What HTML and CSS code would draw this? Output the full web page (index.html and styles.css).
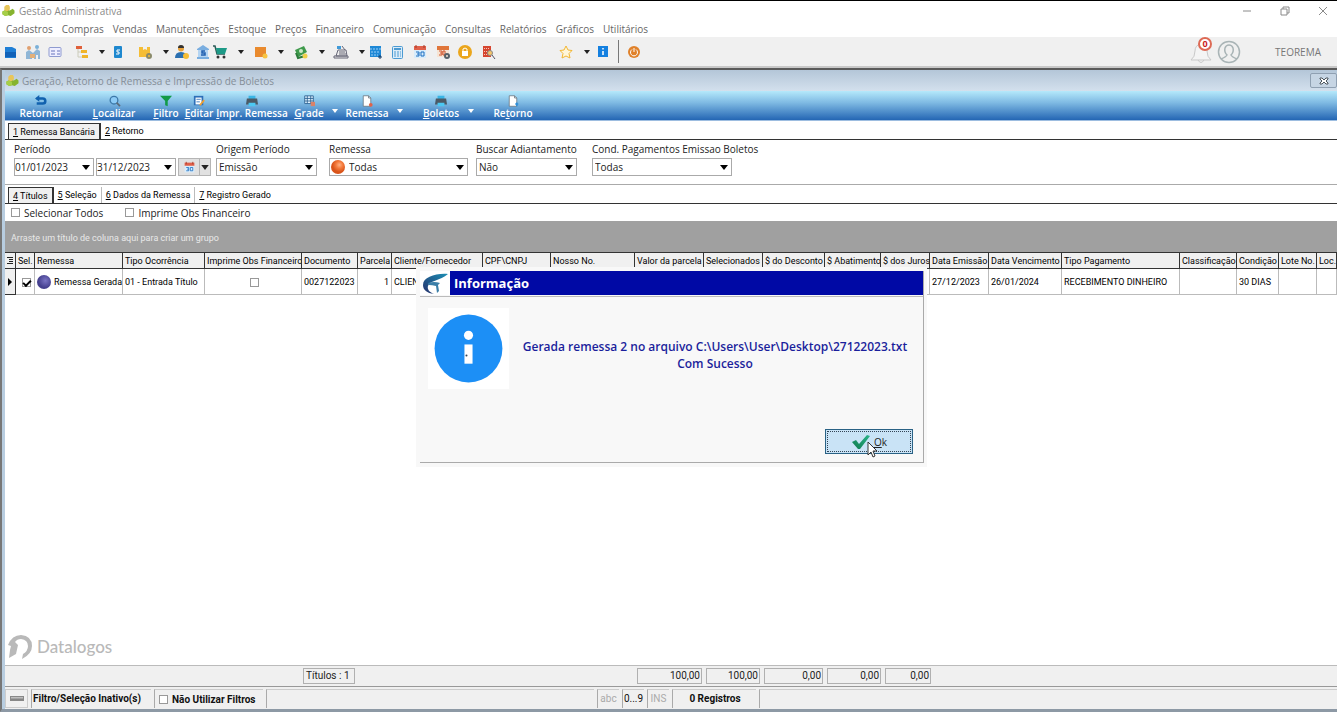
FILE: index.html
```html
<!DOCTYPE html>
<html lang="pt-BR">
<head>
<meta charset="utf-8">
<title>Gestão Administrativa</title>
<link rel="stylesheet" href="styles.css">
</head>
<body>
<svg width="0" height="0" class="defs" aria-hidden="true">
  <defs>
    <linearGradient id="g-logo" x1="0" y1="1" x2="1" y2="0"><stop offset="0" stop-color="#27306b"/><stop offset="1" stop-color="#1b8fb5"/></linearGradient>
    <linearGradient id="g-tick" x1="0" y1="1" x2="1" y2="0"><stop offset="0" stop-color="#0f7a4d"/><stop offset="1" stop-color="#2bb58a"/></linearGradient>
    <radialGradient id="g-orange" cx=".6" cy=".35"><stop offset="0" stop-color="#ffb184"/><stop offset=".5" stop-color="#f47a3c"/><stop offset="1" stop-color="#d9541a"/></radialGradient>
    <radialGradient id="g-violet" cx=".6" cy=".4"><stop offset="0" stop-color="#7a74c4"/><stop offset="1" stop-color="#45408f"/></radialGradient>
    <symbol id="app" viewBox="0 0 14 14"><path d="M1 8l4-2 4 1 3-2 2 2v3l-4 3-3-1-3 1-3-2z" fill="#86b32e"/><path d="M3 3l2-2h3l1 2v3l-3 2-3-1z" fill="#e8c65a"/><path d="M1 8l3-1 3 2v3l-3 1-3-2z" fill="#a6cf48"/></symbol>
    <symbol id="cal" viewBox="0 0 16 16"><path d="M2 2h12v4H2z" fill="#e0604a"/><path d="M2 6h12v8H2z" fill="#d8ecfb"/><path d="M4 1v3M12 1v3" stroke="#a33a28"/><path d="M4 8h3v4H4M5 10h2M9 8h3v4H9z" stroke="#1c6fc0" fill="none"/></symbol>
    <symbol id="print" viewBox="0 0 16 14"><path d="M4 1h8v4H4z" fill="#39b6e6"/><path d="M2 4h12l1 7H1z" fill="#4b5a66"/><path d="M4 9h8v4H4z" fill="#4cc8f2"/></symbol>
    <symbol id="page" viewBox="0 0 16 16"><path d="M3 1h7l3 3v11H3z" fill="#fff" stroke="#66707a"/><path d="M10 1v3h3" fill="none" stroke="#66707a"/></symbol>
    <symbol id="tri" viewBox="0 0 6 4"><path d="M0 0h6L3 4z" fill="currentColor"/></symbol>
  </defs>
</svg>
<div class="app">
  <header class="titlebar">
    <svg class="app-icon"><use href="#app"/></svg>
    <h1>Gestão Administrativa</h1>
    <div class="win-buttons">
      <button aria-label="Minimizar"><svg viewBox="0 0 10 10"><path d="M1 5h8"/></svg></button>
      <button aria-label="Restaurar"><svg viewBox="0 0 10 10"><path d="M1 3h6v6H1zM3 3V1h6v6H7"/></svg></button>
      <button aria-label="Fechar"><svg viewBox="0 0 10 10"><path d="M1 1l8 8M9 1L1 9"/></svg></button>
    </div>
  </header>
  <nav class="menu">
    <a href="#">Cadastros</a><a href="#">Compras</a><a href="#">Vendas</a><a href="#">Manutenções</a><a href="#">Estoque</a><a href="#">Preços</a><a href="#">Financeiro</a><a href="#">Comunicação</a><a href="#">Consultas</a><a href="#">Relatórios</a><a href="#">Gráficos</a><a href="#">Utilitários</a>
  </nav>
  <div class="toolbar">
    <div class="tools">
      <button aria-label="Empresa"><svg viewBox="0 0 16 16"><path d="M3 3h7l4 2v9H3z" fill="#1f7fd6"/><path d="M3 8h11v5H3z" fill="#1262b8"/></svg></button>
      <button aria-label="Clientes"><svg viewBox="0 0 16 16"><circle cx="4" cy="4" r="2" fill="#e0a070"/><circle cx="12" cy="3" r="2" fill="#7ab0d8"/><path d="M1 15V8l3-2 4 3 4-4 3 2v8h-2v-4h-2v4H9v-4H7v4z" fill="#8fb6d6"/><path d="M5 10h5v4H5z" fill="#e2b07a"/></svg></button>
      <button aria-label="Cartão"><svg viewBox="0 0 16 16"><rect x="2" y="3.500" width="12" height="9" rx="1" fill="#eef" stroke="#8f9bd0"/><path d="M4 7h4M4 10h4M10 7h3M10 10h3" stroke="#6674bb"/></svg></button>
      <button aria-label="Estrutura"><svg viewBox="0 0 16 16"><path d="M4 5v8h5M4 8h4" fill="none" stroke="#ccb"/><path d="M2 2h6v3H2z" fill="#e0603a"/><path d="M7 6h6v3H7zM8 11h6v3H8z" fill="#f0b429"/></svg></button>
      <button class="drop" aria-label="Mais"><svg><use href="#tri"/></svg></button>
      <button aria-label="Preço"><svg viewBox="0 0 16 16"><rect x="4" y="2" width="8" height="12" rx="1" fill="#1e88cf"/><path d="M10 6H7v2h2v2H6" fill="none" stroke="#fff"/></svg></button>
      <button aria-label="Produto"><svg viewBox="0 0 16 16"><path d="M2 3h4v3l2-1 2 1V3h3v10H2z" fill="#f5bd35"/><circle cx="12" cy="12" r="2" fill="none" stroke="#8a8a6a" stroke-width="2"/></svg></button>
      <button class="drop" aria-label="Mais"><svg><use href="#tri"/></svg></button>
      <button aria-label="Usuário"><svg viewBox="0 0 16 16"><circle cx="7" cy="4.500" r="3" fill="#e8a13a"/><path d="M4 4q0-3 3-3t3 3z" fill="#333"/><path d="M1 14q0-6 6-6t6 6z" fill="#2a6fb0"/><circle cx="12" cy="12" r="3" fill="#f5bd35"/></svg></button>
      <button aria-label="Banco"><svg viewBox="0 0 16 16"><path d="M2 5l6-4 6 4v1H2zM2 13h12v2H2z" fill="#7aaee0"/><path d="M3 6h10v7H3z" fill="#b4d4f2"/><path d="M10 7H7v2h3v2H6" fill="none" stroke="#205fb0" stroke-width="1.500"/></svg></button>
      <button aria-label="Compras"><svg viewBox="0 0 16 16"><path d="M1 2h2l2 8h8" fill="none" stroke="#2a5a55" stroke-width="1.500"/><path d="M4 4h11l-2 6H5z" fill="#1d9a87"/><circle cx="6" cy="13" r="1.500" fill="#333"/><circle cx="12" cy="13" r="1.500" fill="#333"/></svg></button>
      <button class="drop" aria-label="Mais"><svg><use href="#tri"/></svg></button>
      <button aria-label="Estoque"><svg viewBox="0 0 16 16"><path d="M2 3h11v10H2z" fill="#e98a2e"/><circle cx="12" cy="12" r="2.500" fill="#f7c443"/></svg></button>
      <button class="drop" aria-label="Mais"><svg><use href="#tri"/></svg></button>
      <button aria-label="Dinheiro"><svg viewBox="0 0 16 16"><path d="M2 6l9-4 3 6-9 5z" fill="#3f9a4c"/><circle cx="8" cy="7" r="2" fill="#cde8c8"/><path d="M3 9l2 5 7-2" fill="none" stroke="#2b7a3a" stroke-width="2"/><circle cx="12" cy="12" r="2.500" fill="#f0cf4a"/></svg></button>
      <button class="drop" aria-label="Mais"><svg><use href="#tri"/></svg></button>
      <button aria-label="Caixa"><svg viewBox="0 0 16 16"><path d="M1 12h14v2H1zM3 12l2-6h8l1 6z" fill="#eee" stroke="#667"/><path d="M4 2h4v3H4z" fill="#3f9ad8"/><path d="M9 2l3 4M6 8h6M6 10h7" stroke="#667"/></svg></button>
      <button class="drop" aria-label="Mais"><svg><use href="#tri"/></svg></button>
      <button aria-label="Agenda"><svg viewBox="0 0 16 16"><path d="M3 2h11v11H3z" fill="#1e88d6"/><path d="M3 5h11M4 8h9M4 11h7" stroke="#9ad0f8" stroke-dasharray="2 1"/><path d="M11 13h4M13 11v4" stroke="#123a66"/></svg></button>
      <button aria-label="Calculadora"><svg viewBox="0 0 16 16"><rect x="3.500" y="2.500" width="10" height="12" rx="1" fill="#dcecf8" stroke="#4b9ad2"/><path d="M5 4h7v2H5z" fill="#4b9ad2"/><path d="M5 8h7M5 10h7M5 12h7" stroke="#4b9ad2" stroke-dasharray="2 1"/></svg></button>
      <button aria-label="Calendário"><svg><use href="#cal"/></svg></button>
      <button aria-label="Configurar calendário"><svg viewBox="0 0 16 16"><path d="M2 2h12v4H2z" fill="#e0763a"/><path d="M2 6h12v7H2z" fill="#f6e4d4"/><path d="M4 7h3v4H4M5 9h2M8 7h2v4H8z" stroke="#d0532a" fill="none"/><circle cx="12" cy="12" r="2" fill="none" stroke="#556068" stroke-width="2"/></svg></button>
      <button aria-label="Bloquear"><svg viewBox="0 0 16 16"><circle cx="8" cy="8" r="7" fill="#eba61c"/><path d="M5 7h6v5H5z" fill="#fff"/><path d="M6 7V5q2-2 4 0v2" fill="none" stroke="#fff"/></svg></button>
      <button aria-label="Pesquisar prédio"><svg viewBox="0 0 16 16"><path d="M3 2h8v11H3z" fill="#d6452f"/><path d="M4 4.500h6M4 7.500h6M4 10.500h6" stroke="#f7c6b8" stroke-dasharray="1 1"/><circle cx="10" cy="9" r="2.500" fill="#f5c56a" stroke="#888"/><path d="M12 11l3 4" stroke="#556"/></svg></button>
      <button aria-label="Favoritos"><svg viewBox="0 0 16 16"><path d="M8 2l2 4 4 .5-3 3 1 4.500-4-2-4 2 1-4.500-3-3L6 6z" fill="#fff6d8" stroke="#f2b632"/></svg></button>
      <button class="drop" aria-label="Mais"><svg><use href="#tri"/></svg></button>
      <button aria-label="Informações"><svg viewBox="0 0 16 16"><path d="M3 2h10v11H3z" fill="#1480e0"/><path d="M8 4v1.500M8 7v4" stroke="#fff" stroke-width="1.500"/></svg></button>
      <span class="sep"></span>
      <button aria-label="Sair"><svg viewBox="0 0 16 16"><circle cx="8" cy="8" r="6" fill="#e0812a"/><path d="M6 5.500a3.500 3.500 0 1 0 4 0M8 4v4" fill="none" stroke="#fff"/></svg></button>
    </div>
    <div class="user">
      <button class="bell" aria-label="Notificações"><svg viewBox="0 0 24 26"><path d="M2 21q4-3 4-9 0-6 6-7 6 1 6 7 0 6 4 9z" fill="#f4f4f4" stroke="#c9c9c9"/><path d="M9 21q3 5 6 0" fill="none" stroke="#c9c9c9"/></svg><span class="badge">0</span></button>
      <button class="avatar" aria-label="Usuário"><svg viewBox="0 0 24 24"><circle cx="12" cy="12" r="10.500" fill="none" stroke="#a9b4b6" stroke-width="1.500"/><path d="M4 19q5-2 6-4-3-3-2-7 1-3 4-3t4 3q1 4-2 7 1 2 6 4" fill="none" stroke="#a9b4b6" stroke-width="1.500"/></svg></button>
      <span class="company">TEOREMA</span>
    </div>
  </div>

  <main class="mdi">
    <header class="mdi-title">
      <svg class="app-icon"><use href="#app"/></svg>
      <h2>Geração, Retorno de Remessa e Impressão de Boletos</h2>
      <button class="mdi-close" aria-label="Fechar janela"><svg viewBox="0 0 10 8"><path d="M1 1h2l2 2 2-2h2v1L7 4l2 2v1H7L5 5 3 7H1V6l2-2-2-2z" fill="#fff" stroke="#4b545c"/></svg></button>
    </header>
    <div class="actions">
      <button><svg viewBox="0 0 16 14"><path d="M3 4h7q3 0 3 3t-3 3H3" fill="none" stroke="#1161ae" stroke-width="3"/><path d="M6 0v8L1 4z" fill="#1161ae"/></svg><span>Retornar</span></button>
      <button><svg viewBox="0 0 16 14"><circle cx="8" cy="6" r="4.500" fill="#8ccbf6" stroke="#3c78a8" stroke-width="1.500"/><path d="M11 9l4 4" stroke="#5b6b7a" stroke-width="2"/></svg><span><u>L</u>ocalizar</span></button>
      <button><svg viewBox="0 0 16 14"><path d="M1 1h14L10 7v6l-3-1V7z" fill="#129a48"/></svg><span><u>F</u>iltro</span></button>
      <button><svg viewBox="0 0 16 14"><path d="M2 1h11v11H2z" fill="#2e6fb8"/><path d="M4 3h7v8H4z" fill="#fff"/><path d="M5 5h5M5 8h4" stroke="#2e6fb8"/><path d="M14 6l-5 6" stroke="#f0a030" stroke-width="2"/></svg><span><u>E</u>ditar</span></button>
      <button><svg viewBox="0 0 16 14"><use href="#print"/></svg><span><u>I</u>mpr. Remessa</span></button>
      <button><svg viewBox="0 0 16 14"><path d="M3 1h10v9H3z" fill="#dff2ff" stroke="#2a6090"/><path d="M6 1v9M10 1v9M3 4h10M3 7h10" stroke="#2a6090"/><path d="M10 8h5v5h-5z" fill="#d9826a"/></svg><span><u>G</u>rade</span></button>
      <button class="drop" aria-label="Opções de grade"><svg><use href="#tri"/></svg></button>
      <button><svg viewBox="0 0 16 16"><use href="#page"/><circle cx="13" cy="13" r="2.500" fill="#e0634a"/></svg><span>Remessa</span></button>
      <button class="drop" aria-label="Opções de remessa"><svg><use href="#tri"/></svg></button>
      <button><svg viewBox="0 0 16 14"><use href="#print"/></svg><span><u>B</u>oletos</span></button>
      <button class="drop" aria-label="Opções de boletos"><svg><use href="#tri"/></svg></button>
      <button><svg viewBox="0 0 16 16"><use href="#page"/><path d="M13 10v5M11 12h4" stroke="#2d8ed8" stroke-width="2"/></svg><span>Re<u>t</u>orno</span></button>
    </div>

    <div class="tabs main-tabs">
      <button class="active"><u>1</u> Remessa Bancária</button><button><u>2</u> Retorno</button>
    </div>
    <form class="filters">
      <div class="field period">
        <label for="d1">Período</label>
        <div class="period-row">
          <span class="combo date"><input id="d1" value="01/01/2023"></span>
          <span class="combo date"><input aria-label="Data final" value="31/12/2023"></span>
          <span class="cal-group"><button type="button" aria-label="Calendário"><svg class="cal-icon"><use href="#cal"/></svg></button><button type="button" class="drop" aria-label="Períodos"><svg><use href="#tri"/></svg></button></span>
        </div>
      </div>
      <div class="field origin"><label for="s1">Origem Período</label><span class="combo"><select id="s1"><option>Emissão</option></select></span></div>
      <div class="field shipment"><label for="s2">Remessa</label><span class="combo with-ball"><svg class="ball" viewBox="0 0 14 14"><circle cx="7" cy="7" r="7" fill="url(#g-orange)"/></svg><select id="s2"><option>Todas</option></select></span></div>
      <div class="field advance"><label for="s3">Buscar Adiantamento</label><span class="combo"><select id="s3"><option>Não</option></select></span></div>
      <div class="field payment"><label for="s4">Cond. Pagamentos Emissao Boletos</label><span class="combo"><select id="s4"><option>Todas</option></select></span></div>
    </form>

    <div class="tabs sub-tabs">
      <button class="active"><u>4</u> Títulos</button><button><u>5</u> Seleção</button><button><u>6</u> Dados da Remessa</button><button><u>7</u> Registro Gerado</button>
    </div>
    <div class="options">
      <label><input type="checkbox">Selecionar Todos</label>
      <label><input type="checkbox">Imprime Obs Financeiro</label>
    </div>
    <div class="group-bar">Arraste um título de coluna aqui para criar um grupo</div>
    <div class="grid-area">
      <table>
        <colgroup><col class="w10"><col class="w20"><col class="w88"><col class="w82"><col class="w96"><col class="w56"><col class="w34"><col class="w91"><col class="w68"><col class="w84"><col class="w69"><col class="w59"><col class="w62"><col class="w56"><col class="w49"><col class="w59"><col class="w73"><col class="w117"><col class="w57"><col class="w42"><col class="w38"><col></colgroup>
        <thead><tr><th><svg class="mark" viewBox="0 0 6 10"><path d="M0 1.500h6M2 3.500h4M2 5.500h4M0 7.500h6" stroke="#222"/></svg></th><th>Sel.</th><th>Remessa</th><th>Tipo Ocorrência</th><th>Imprime Obs Financeiro</th><th>Documento</th><th>Parcela</th><th>Cliente/Fornecedor</th><th>CPF\CNPJ</th><th>Nosso No.</th><th>Valor da parcela</th><th>Selecionados</th><th>$ do Desconto</th><th>$ Abatimento</th><th>$ dos Juros</th><th>Data Emissão</th><th>Data Vencimento</th><th>Tipo Pagamento</th><th>Classificação</th><th>Condição</th><th>Lote No.</th><th>Loc.</th></tr></thead>
        <tbody><tr><td class="current"><svg class="mark" viewBox="0 0 6 10"><path d="M1 1l4 4-4 4z"/></svg></td><td class="center"><input type="checkbox" checked aria-label="Selecionar título"></td><td><span class="status"><svg class="ball" viewBox="0 0 14 14"><circle cx="7" cy="7" r="7" fill="url(#g-violet)"/></svg>Remessa Gerada</span></td><td>01 - Entrada Título</td><td class="center"><input type="checkbox" aria-label="Imprime Obs Financeiro"></td><td>0027122023</td><td class="right">1</td><td>CLIENTE</td><td></td><td></td><td></td><td></td><td></td><td></td><td></td><td>27/12/2023</td><td>26/01/2024</td><td>RECEBIMENTO DINHEIRO</td><td></td><td>30 DIAS</td><td></td><td></td></tr></tbody>
      </table>
      <div class="brand"><svg viewBox="0 0 26 26"><path d="M1 11Q5 1 14 1q11 1 11 11 0 8-10 13l1-5q5-3 5-8 0-6-7-7-4 0-6 3l3 3-2 9-7 4 1-8 1-4z" fill="#b9b9b9"/></svg><span>Datalogos</span></div>
    </div>
    <div class="totals"><output class="count">Títulos : 1</output><output class="t65">100,00</output><output class="t54">100,00</output><output class="t59">0,00</output><output class="t54">0,00</output><output class="t46">0,00</output></div>
    <footer class="statusbar">
      <button aria-label="Filtro"><span class="led"></span></button>
      <strong>Filtro/Seleção Inativo(s)</strong>
      <label><input type="checkbox">Não Utilizar Filtros</label>
      <span class="message"></span>
      <span class="key off">abc</span><span class="key">0...9</span><span class="key off">INS</span>
      <strong class="records">0 Registros</strong>
      <span class="rest"></span>
    </footer>
  </main>
</div>

<section class="dialog" role="dialog" aria-labelledby="dlg">
  <div class="dialog-frame">
    <header><svg class="dlg-logo" viewBox="0 0 30 24"><path d="M28 3C16 2 3 6 3 14c0 5 4 8 11 9-5-2-7-5-6-8C10 9 20 10 28 3z" fill="url(#g-logo)"/><path d="M8 12q6-2 12 0l-2 2 1 6-2 2-1-7q-4-1-7-1z" fill="#3b7fa8"/></svg><h3 id="dlg">Informação</h3></header>
    <div class="dialog-body">
      <svg class="info" viewBox="0 0 80 80"><circle cx="40" cy="40" r="33.500" fill="#1c8ff6"/><circle cx="40" cy="27" r="4.500" fill="#fff"/><path d="M36 36h8v19h-8z" fill="#fff"/><circle cx="38" cy="47" r="1" fill="#345"/></svg>
      <p>Gerada remessa 2 no arquivo C:\Users\User\Desktop\27122023.txt<br>Com Sucesso</p>
    </div>
    <div class="dialog-foot"><button><svg viewBox="0 0 20 16"><path d="M1 8l4-2 3 4 8-9 3 1-10 13H7z" fill="url(#g-tick)"/></svg><span><u>O</u>k</span></button></div>
  </div>
  <svg class="cursor" viewBox="0 0 12 18"><path d="M1 1v13l3-3 2 5 2-1-2-5h4z" fill="#fff" stroke="#333"/></svg>
</section>
</body>
</html>
```
FILE: styles.css
```css
* { box-sizing: border-box; }
body { margin: 0; font: 10px/14px "Open Sans", "Noto Sans", sans-serif; color: #222; background: #fff; overflow: hidden; }
button, input, select { font: inherit; color: inherit; margin: 0; }
button { padding: 0; border: 0; background: none; }
h1, h2, h3, p { margin: 0; font-size: inherit; font-weight: 400; }
a { color: inherit; text-decoration: none; }
.defs { position: absolute; }
.app { height: 100vh; display: flex; flex-direction: column; border-top: 1px solid #000; }
.app-icon { width: 14px; height: 13px; flex: none; }

.titlebar { display: flex; align-items: center; gap: 4px; height: 19px; padding-left: 1px; color: #8a8a8a; }
.win-buttons { margin-left: auto; display: flex; gap: 28px; padding-right: 9px; }
.win-buttons button { width: 10px; height: 10px; display: flex; }
.win-buttons svg { width: 10px; height: 10px; fill: none; stroke: #8a8a8a; }
.menu { display: flex; gap: 9px; height: 17px; padding-left: 6px; align-items: center; color: #666; }

.toolbar { display: flex; justify-content: space-between; height: 31px; background: #f0f0f0; border-bottom: 2px solid #c8c8c8; }
.tools { display: grid; padding-left: 2px; align-items: center; grid-template-columns: 23px 22px 27px 25px 11px 27px 26px 11px 21px 17px 26px 15px 25px 15px 26px 14px 26px 8px 22px 23px 23px 22px 23px 78px 26px 11px 23px 8px 16px; }
.tools button, .tools svg { display: block; width: 16px; height: 16px; }
.tools .drop { display: flex; align-items: center; width: 6px; color: #222; }
.tools .drop svg { width: 6px; height: 4px; }
.sep { width: 1px; height: 23px; background: #777; }
.user { display: flex; align-items: center; padding-right: 16px; color: #777; }
.bell { position: relative; width: 24px; height: 26px; margin-right: 4px; }
.bell svg { width: 24px; height: 26px; }
.badge { position: absolute; right: 1px; top: -2px; width: 14px; height: 14px; border: 2px solid #dd6a55; border-radius: 50%; background: #fff; color: #c22; font-size: 9px; line-height: 10px; font-weight: 700; }
.avatar { width: 24px; height: 24px; margin-right: 34px; }
.avatar svg { width: 24px; height: 24px; }

.mdi { flex: 1; min-height: 0; display: flex; flex-direction: column; border-top: 2px solid #5a5a5a; border-left: 2px solid #777; border-bottom: 3px solid #8d99a5; padding-left: 3px; background: linear-gradient(90deg, #b8cde0 3px, #fff 3px); }
.mdi-title { display: flex; align-items: center; gap: 3px; height: 21px; background: linear-gradient(#b4c6d8, #d3e0ed); color: #858e98; }
.mdi-close { margin-left: auto; width: 27px; height: 15px; border: 1px solid #8fa0b2; border-radius: 2px; background: #c6d5e4; display: grid; place-items: center; }
.mdi-close svg { width: 10px; height: 8px; }

.actions { display: grid; grid-template-columns: 72px 74px 30px 36px 70px 44px 8px 56px 10px 72px 0 72px; height: 30px; background: linear-gradient(#b5e9fb, #7fbae3 40%, #2466b4); border-bottom: 1px solid #9dbde0; color: #fff; font-weight: 600; }
.actions button { display: flex; flex-direction: column; align-items: center; justify-content: flex-end; line-height: 13px; white-space: nowrap; }
.actions svg { width: 14px; height: 12px; }
.actions .drop { justify-content: center; padding-top: 10px; }
.actions .drop:nth-child(11) { width: 12px; margin-left: -12px; }
.actions .drop svg { width: 6px; height: 4px; flex: none; }

.tabs { display: flex; align-items: flex-end; padding-left: 3px; border-bottom: 1px solid #333; font: 9px/14px Roboto, "Liberation Sans", sans-serif; color: #000; height: 19px; }
.tabs button { height: 16px; padding: 0 4px; border-right: 1px solid #bbb; }
.tabs button:last-child { border-right: 0; }
.tabs .active { background: #f0f0f0; border: 1px solid #333; border-width: 1px 2px 0 1px; border-right-color: #333; }

.filters { display: flex; align-items: flex-start; height: 45px; padding: 2px 0 0 9px; border-bottom: 1px solid #aaa; }
.field { display: flex; flex-direction: column; gap: 2px; flex: none; }
.field label { white-space: nowrap; font-weight: 500; }
.period { width: 202px; }
.origin { width: 113px; }
.shipment { width: 147px; }
.advance { width: 116px; }
.period-row { display: flex; gap: 2px; }
.combo { position: relative; display: flex; align-items: center; height: 18px; border: 1px solid #aaa; background: #fff; }
.combo::after { content: ""; position: absolute; right: 3px; top: 6px; border: 4px solid transparent; border-top: 5px solid #000; border-bottom: 0; pointer-events: none; }
.combo input, .combo select { appearance: none; border: 0; padding: 0 0 0 2px; width: 100%; min-width: 0; height: 16px; background: transparent; outline: 0; }
.combo input { padding-left: 0; }
.date { width: 80px; }
.origin .combo { width: 101px; }
.shipment .combo { width: 139px; }
.advance .combo { width: 101px; }
.payment .combo { width: 140px; }
.with-ball { gap: 2px; padding-left: 1px; }
.ball { width: 14px; height: 14px; flex: none; }
.cal-group { display: flex; height: 18px; background: #e1e1e1; border: 1px solid #b5b5b5; }
.cal-group button { width: 20px; display: grid; place-items: center; }
.cal-group .drop { width: 11px; border-left: 1px solid #b5b5b5; }
.cal-icon { width: 13px; height: 13px; }
.cal-group .drop svg { width: 8px; height: 5px; }

input[type="checkbox"] { appearance: none; width: 9px; height: 9px; border: 1px solid #999; background: #fff; flex: none; }
input[type="checkbox"]:checked { background: #fff; display: inline-grid; place-items: center; }
input[type="checkbox"]:checked::after { content: ""; width: 6px; height: 3px; border: 2px solid #000; border-top: 0; border-right: 0; transform: rotate(-45deg); }
.options { display: flex; gap: 22px; align-items: center; height: 17px; padding-left: 6px; font-weight: 500; }
.options label, .statusbar label { display: flex; align-items: center; gap: 4px; }
.group-bar { height: 31px; padding: 10px 6px 0; background: #a0a0a0; color: #e8e8e8; font-size: 9px; font-family: Roboto, "Liberation Sans", sans-serif; }

.grid-area { flex: 1; min-height: 0; display: flex; flex-direction: column; justify-content: space-between; }
table { width: 100%; table-layout: fixed; border-collapse: separate; border-spacing: 0; font: 9px/14px Roboto, "Liberation Sans", sans-serif; color: #000; }
th, td { padding: 0 0 0 2px; overflow: hidden; white-space: nowrap; text-align: left; font-weight: 400; border-right: 1px solid #bbb; }
th { height: 17px; background: #f0f0f0; border-top: 1px solid #333; border-bottom: 1px solid #333; border-right-color: #333; }
td { height: 26px; border-bottom: 1px solid #bbb; }
.center { text-align: center; }
.center input { vertical-align: middle; }
.right { text-align: right; padding-right: 2px; }
.status { display: flex; align-items: center; gap: 3px; }
.mark { display: block; width: 6px; height: 10px; }
.current { background: #f0f0f0; border-color: #333; }
.w10 { width: 11px; } .w20 { width: 19px; } .w34 { width: 34px; } .w38 { width: 38px; } .w42 { width: 42px; }
.w49 { width: 49px; } .w56 { width: 56px; } .w57 { width: 57px; } .w59 { width: 59px; } .w62 { width: 62px; }
.w68 { width: 68px; } .w69 { width: 69px; } .w73 { width: 73px; } .w82 { width: 82px; } .w84 { width: 84px; }
.w88 { width: 88px; } .w91 { width: 91px; } .w96 { width: 97px; } .w117 { width: 118px; }

.brand { display: flex; align-items: center; gap: 4px; padding: 0 0 5px 2px; color: #b9b9b9; font: 500 17px/26px Lato, sans-serif; }
.brand svg { width: 26px; height: 26px; }
.totals { display: flex; align-items: center; gap: 4px; height: 22px; padding-left: 298px; background: #f0f0f0; border-top: 1px solid #bbb; border-bottom: 1px solid #999; font-family: Roboto, sans-serif; }
.totals output { height: 16px; border: 1px solid #b0b0b0; text-align: right; padding-right: 1px; }
.totals .count { width: 52px; margin-right: 278px; text-align: left; padding-left: 2px; }
.t65 { width: 65px; } .t54 { width: 54px; } .t59 { width: 59px; } .t46 { width: 46px; }
.statusbar { display: flex; gap: 3px; height: 22px; padding: 2px 0 1px; background: #f0f0f0; font: 10px/17px Roboto, sans-serif; color: #111; }
.statusbar > * { border-left: 1px solid #aaa; border-top: 1px solid #ccc; white-space: nowrap; }
.statusbar > button { width: 23px; border: 1px solid #ccc; display: grid; place-items: center; }
.led { width: 14px; height: 5px; background: linear-gradient(#ccc, #777); border: 1px solid #888; }
.statusbar strong { width: 120px; padding-left: 1px; }
.statusbar label { width: 109px; padding-left: 4px; font-weight: 700; }
.message { width: 328px; }
.statusbar .key { width: 22px; text-align: center; }
.off { color: #aaa; }
.statusbar .records { width: 84px; text-align: center; }
.rest { flex: 1; }

.dialog { position: absolute; left: 416px; top: 267px; width: 511px; height: 200px; padding: 4px 3px 4px 4px; background: #f8f8f8; }
.dialog-frame { height: 100%; display: flex; flex-direction: column; border-right: 1px solid #aaa; border-bottom: 1px solid #aaa; }
.dialog header { display: flex; height: 26px; border-bottom: 1px solid #bbb; padding-bottom: 1px; }
.dlg-logo { width: 30px; height: 24px; background: #fff; }
.dialog h3 { flex: 1; padding-left: 4px; background: #0009a5; color: #fff; font-size: 13px; line-height: 25px; font-weight: 700; }
.dialog-body { flex: 1; display: flex; align-items: flex-start; padding: 11px 2px 0 8px; }
.info { width: 81px; height: 81px; flex: none; background: #fff; }
.dialog-body p { flex: 1; padding-top: 30px; text-align: center; color: #1b1f9c; font-size: 12px; line-height: 17px; font-weight: 600; white-space: nowrap; }
.dialog-foot { display: flex; justify-content: flex-end; padding: 0 10px 8px 0; }
.dialog-foot button { width: 88px; height: 25px; display: flex; align-items: center; justify-content: center; gap: 3px; background: #c9e3f6; border: 1px solid #2a6285; outline: 1px dotted #345; outline-offset: -3px; }
.dialog-foot svg { width: 20px; height: 16px; }
.cursor { position: absolute; left: 451px; top: 174px; width: 12px; height: 18px; }
```
